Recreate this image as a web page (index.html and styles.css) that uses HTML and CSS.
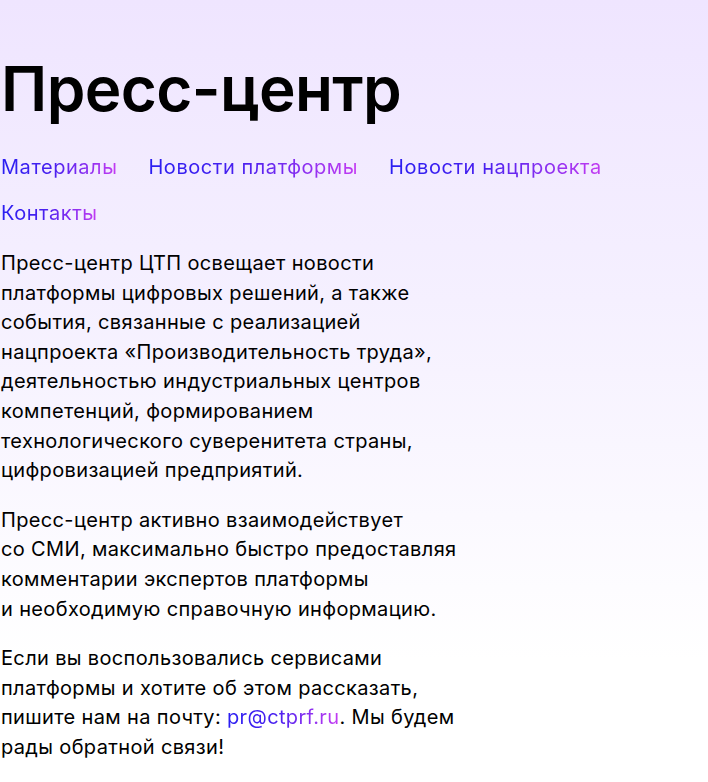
FILE: index.html
```html
<!DOCTYPE html>
<html lang="ru">
<head>
<meta charset="utf-8">
<title>Пресс-центр</title>
<link rel="stylesheet" href="styles.css">
</head>
<body>
<main class="page">
  <h1 class="title">Пресс-центр</h1>
  <nav class="nav">
    <a class="grad" href="#">Материалы</a>
    <a class="grad" href="#">Новости платформы</a>
    <a class="grad" href="#">Новости нацпроекта</a>
    <a class="grad" href="#">Контакты</a>
  </nav>
  <div class="text">
    <p>Пресс-центр ЦТП освещает новости платформы цифровых решений, а&nbsp;также события, связанные с&nbsp;реализацией нацпроекта «Производительность труда», деятельностью индустриальных центров компетенций, формированием технологического суверенитета страны, цифровизацией предприятий.</p>
    <p>Пресс-центр активно взаимодействует<br>со&nbsp;СМИ, максимально быстро предоставляя<br>комментарии экспертов платформы<br>и&nbsp;необходимую справочную информацию.</p>
    <p>Если вы воспользовались сервисами<br>платформы и&nbsp;хотите об&nbsp;этом рассказать,<br>пишите нам на&nbsp;почту: <a class="grad" href="#">pr@ctprf.ru</a>. Мы будем<br>рады обратной связи!</p>
  </div>
</main>
</body>
</html>
```
FILE: styles.css
```css
html, body {
  margin: 0;
  padding: 0;
}
body {
  min-height: 782px;
  background: linear-gradient(180deg, #efe5ff 0, #f5f0ff 300px, #ffffff 660px);
  font-family: "Inter", "Noto Sans", sans-serif;
  color: #000;
}
.page {
  padding: 49px 0 0 1px;
}
.title {
  margin: 0;
  font-size: 62px;
  font-weight: 600;
  line-height: 80px;
  letter-spacing: -0.6px;
}
.nav {
  display: flex;
  flex-wrap: wrap;
  column-gap: 31px;
  row-gap: 16px;
  max-width: 660px;
  margin-top: 23px;
  font-size: 20px;
  line-height: 30px;
  letter-spacing: 0.55px;
}
.grad {
  text-decoration: none;
  background: linear-gradient(90deg, #2a1ef2 0%, #4a20ef 45%, #c43cf2 100%);
  -webkit-background-clip: text;
  background-clip: text;
  color: transparent;
}
.text {
  max-width: 470px;
  margin-top: 21px;
  font-size: 20px;
  line-height: 29.6px;
  letter-spacing: 0.35px;
}
.text p {
  margin: 0 0 20px;
}
```
